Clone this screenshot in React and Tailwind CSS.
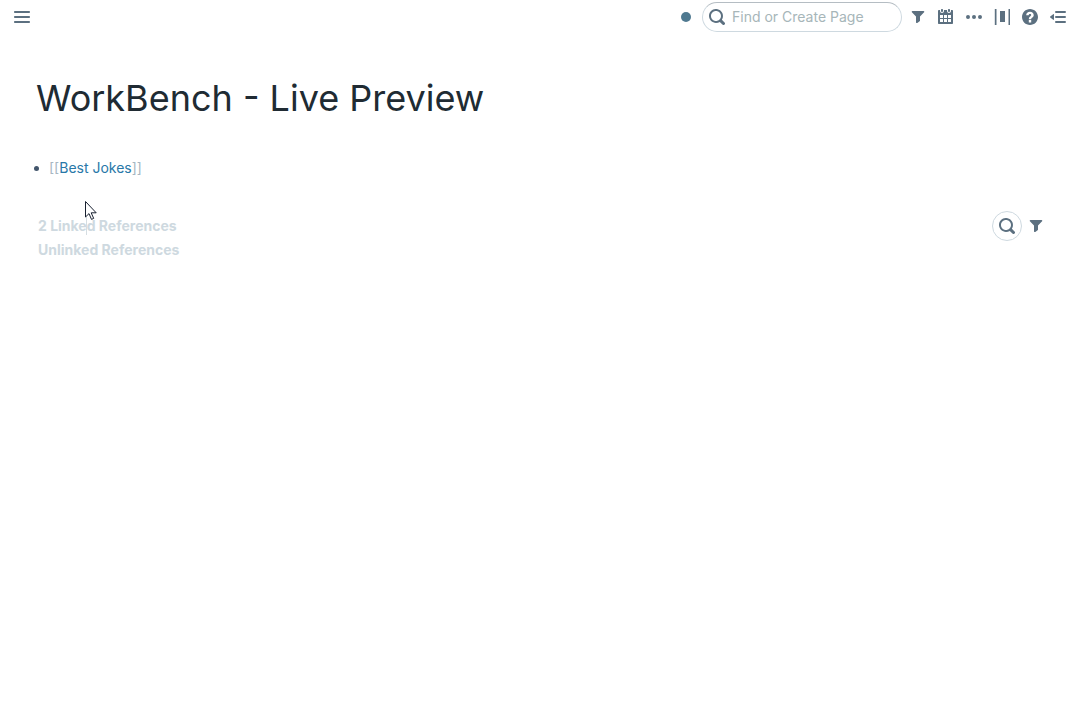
const paths = {
  menu: "M1 4h14c.55 0 1-.45 1-1s-.45-1-1-1H1c-.55 0-1 .45-1 1s.45 1 1 1zm14 8H1c-.55 0-1 .45-1 1s.45 1 1 1h14c.55 0 1-.45 1-1s-.45-1-1-1zm0-5H1c-.55 0-1 .45-1 1s.45 1 1 1h14c.55 0 1-.45 1-1s-.45-1-1-1z",
  search: "M15.55 13.43l-2.67-2.68a6.94 6.94 0 001.11-3.76c0-3.87-3.13-7-7-7s-7 3.13-7 7 3.13 7 7 7c1.39 0 2.68-.42 3.76-1.11l2.68 2.67a1.498 1.498 0 102.12-2.12zm-8.56-1.44c-2.76 0-5-2.24-5-5s2.24-5 5-5 5 2.24 5 5-2.24 5-5 5z",
  filter: "M13.6 2h-11.200a.7.7 0 00-.5 1.200L6 7.600V13.300a.8.8 0 001.300.6l2.300-1.700c.3-.2.4-.5.4-.8V7.600L14.100 3.200a.7.7 0 00-.5-1.200z",
  calendar: "M11 3c.6 0 1-.5 1-1V1c0-.6-.4-1-1-1s-1 .4-1 1v1c0 .5.4 1 1 1zm3-2h-1v1c0 1.1-.9 2-2 2s-2-.9-2-2V1H6v1c0 1.1-.9 2-2 2s-2-.9-2-2V1H1c-.6 0-1 .5-1 1v12c0 .6.4 1 1 1h13c.6 0 1-.4 1-1V2c0-.6-.5-1-1-1zM5 13H2v-3h3v3zm0-4H2V6h3v3zm4 4H6v-3h3v3zm0-4H6V6h3v3zm4 4h-3v-3h3v3zm0-4h-3V6h3v3zM4 3c.6 0 1-.5 1-1V1c0-.6-.4-1-1-1S3 .4 3 1v1c0 .5.4 1 1 1z",
  more: "M2 6.03a2 2 0 100 4 2 2 0 100-4zM14 6.03a2 2 0 100 4 2 2 0 100-4zM8 6.03a2 2 0 100 4 2 2 0 100-4z",
  columns: "M.8 0h1.700v16H.8zM6 2h5v11H6zM14.500 0H16v16h-1.500z",
  help: "M8 0C3.58 0 0 3.58 0 8s3.58 8 8 8 8-3.58 8-8-3.58-8-8-8zM6.800 13.400v-2.300h2.400v2.300H6.800zm4.800-6.700c-.2 1-1 1.600-1.600 2.100C9.500 9.200 9.200 9.500 9.200 10.200H6.800c0-1.700.9-2.400 1.600-3 .5-.4.8-.6.8-1.100 0-.6-.5-1-1.200-1S6.700 5.500 6.700 6.300H4.200C4.200 4.100 5.800 2.700 8 2.700s3.700 1.300 3.700 3.300c0 .3 0 .5-.1.700z",
  closed: "M4 5.500c0-.45-.5-.68-.8-.35l-3 2.300c-.25.3-.25.8 0 1.100l3 2.300c.3.33.8.1.8-.35zM6 2h9a1 1 0 010 2H6a1 1 0 010-2zM6 7h9a1 1 0 010 2H6a1 1 0 010-2zM6 12h9a1 1 0 010 2H6a1 1 0 010-2z",
};

function Icon({ name }) {
  return (
    <svg viewBox="0 0 16 16" className="size-4 shrink-0 fill-[#5c7080]" aria-hidden="true">
      <path fillRule="evenodd" d={paths[name]} />
    </svg>
  );
}

function IconButton({ name, label }) {
  return (
    <button type="button" aria-label={label} className="flex size-7 items-center justify-center">
      <Icon name={name} />
    </button>
  );
}

export default function App() {
  return (
    <div className="relative min-h-screen bg-white font-['Inter',sans-serif] text-sm text-[#202b33]">
      <header className="flex items-center justify-between px-2 pt-0.5">
        <IconButton name="menu" label="Open menu" />
        <div className="flex items-center">
          <span className="mr-[11px] size-2.5 rounded-full bg-[#4f7990]" />
          <label className="mr-0.5 flex h-[30px] w-[200px] items-center gap-[7px] rounded-full border border-[#ced9e0] border-t-[#b5bdc3] px-1.5">
            <Icon name="search" />
            <input type="text" aria-label="Find or Create Page" placeholder="Find or Create Page" className="w-full min-w-0 bg-transparent outline-none placeholder:text-[#a7b6b9]" />
          </label>
          <IconButton name="filter" label="Filter" />
          <IconButton name="calendar" label="Daily notes" />
          <IconButton name="more" label="More" />
          <IconButton name="columns" label="Page width" />
          <IconButton name="help" label="Help" />
          <IconButton name="closed" label="Open right sidebar" />
        </div>
      </header>
      <main className="px-9 pt-10">
        <h1 className="text-4xl leading-[52px]">WorkBench - Live Preview</h1>
        <ul className="mt-8">
          <li className="flex h-6 items-center gap-2.5">
            <span className="-ml-0.5 size-[5px] rounded-full bg-[#43566c]" />
            <span className="text-[#a7b6c2]">[[<a href="#best-jokes" className="text-[#2878a8]">Best Jokes</a>]]</span>
          </li>
        </ul>
        <section className="-mr-1.5 mt-[31px] flex items-start justify-between font-bold leading-6 text-[#ced9e0]">
          <div className="pl-0.5 pt-[3px]">
            <h2>2 Linked References</h2>
            <h2>Unlinked References</h2>
          </div>
          <div className="flex items-center">
            <button type="button" aria-label="Search references" className="flex size-[30px] items-center justify-center rounded-full border border-[#ced9e0]">
              <Icon name="search" />
            </button>
            <IconButton name="filter" label="Filter references" />
          </div>
        </section>
      </main>
      <span className="absolute left-[86px] top-[217px] h-[18px] w-px bg-[#d5dde2]" />
      <svg viewBox="0 0 13 20" className="absolute left-[85px] top-[201px] h-5 w-[13px]" aria-hidden="true">
        <path d="M.5.5v15.500l3.500-3.400 2.500 5.800 2.200-1-2.500-5.600h5z" fill="white" stroke="#182030" />
      </svg>
    </div>
  );
}
